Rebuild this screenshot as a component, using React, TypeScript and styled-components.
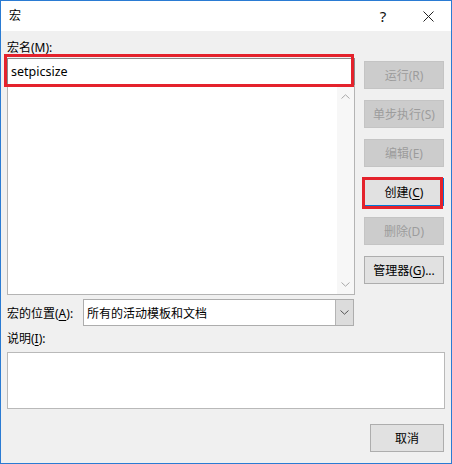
import styled, { createGlobalStyle } from "styled-components";

const GlobalStyle = createGlobalStyle`
	body {
		margin: 0;
		background: #ffffff;
		font-family: "Noto Sans", "Noto Sans CJK SC", sans-serif;
		font-size: 12px;
		color: #000000;
	}
`;

const Window = styled.div`
	width: 452px;
	height: 464px;
	box-sizing: border-box;
	border: 1px solid #2a7bd3;
	display: flex;
	flex-direction: column;
	background-color: #f0f0f0;
`;

const TitleBar = styled.div`
	height: 30px;
	display: flex;
	align-items: center;
	background-color: #ffffff;
	padding-left: 8px;
`;

const Title = styled.span`
	flex: 1;
	font-size: 12px;
	line-height: 16px;
`;

const CaptionButton = styled.div<{ $w: number }>`
	width: ${(p) => p.$w}px;
	height: 30px;
	display: flex;
	align-items: center;
	justify-content: center;
	font-size: 15px;
	color: #111111;
`;

const Body = styled.div`
	flex: 1;
	padding: 9px 6px 0;
	display: flex;
	flex-direction: column;
`;

const TopRow = styled.div`
	display: flex;
	align-items: flex-start;
	gap: 9px;
`;

const LeftCol = styled.div`
	width: 348px;
	display: flex;
	flex-direction: column;
`;

const Label = styled.div<{ $mt?: number }>`
	line-height: 16px;
	height: 16px;
	margin-top: ${(p) => p.$mt ?? 0}px;
	white-space: nowrap;
`;

const FieldWrap = styled.div`
	position: relative;
	margin-top: 2px;
`;

const NameField = styled.div`
	height: 27px;
	box-sizing: border-box;
	border: 1px solid #8a8a8a;
	background-color: #ffffff;
	padding-left: 3px;
	display: flex;
	align-items: center;
	font-size: 12.5px;
`;

const Highlight = styled.div<{ $l: number; $t: number; $w: number; $h: number }>`
	position: absolute;
	left: ${(p) => p.$l}px;
	top: ${(p) => p.$t}px;
	width: ${(p) => p.$w}px;
	height: ${(p) => p.$h}px;
	box-sizing: border-box;
	border: 3px solid #e4222c;
	pointer-events: none;
`;

const ListBox = styled.div`
	height: 211px;
	box-sizing: border-box;
	margin-top: -1px;
	border: 1px solid #b4b4b4;
	background-color: #ffffff;
	display: flex;
	justify-content: flex-end;
`;

const ScrollBar = styled.div`
	width: 17px;
	background-color: #f7f7f7;
	display: flex;
	flex-direction: column;
	justify-content: space-between;
	align-items: center;
	padding: 9px 0 7px;
`;

const RightCol = styled.div`
	width: 80px;
	padding-top: 21px;
	display: flex;
	flex-direction: column;
	gap: 11px;
`;

const ButtonWrap = styled.div`
	position: relative;
`;

const Button = styled.div<{ $disabled?: boolean; $default?: boolean; $w?: number }>`
	width: ${(p) => p.$w ?? 80}px;
	height: 28px;
	box-sizing: border-box;
	display: flex;
	align-items: center;
	justify-content: center;
	white-space: nowrap;
	background-color: ${(p) => (p.$disabled ? "#cccccc" : "#e1e1e1")};
	border: 1px solid
		${(p) => (p.$disabled ? "#c4c4c4" : p.$default ? "#0078d7" : "#adadad")};
	color: ${(p) => (p.$disabled ? "#9c9c9c" : "#000000")};
`;

const Mnemonic = styled.u`
	text-underline-offset: 2px;
`;

const LocationRow = styled.div`
	display: flex;
	align-items: center;
	margin-top: 4px;
	height: 27px;
`;

const LocationLabel = styled.div`
	width: 76px;
	white-space: nowrap;
`;

const Combo = styled.div`
	width: 271px;
	height: 27px;
	box-sizing: border-box;
	border: 1px solid #adadad;
	background-color: #ffffff;
	display: flex;
	align-items: stretch;
`;

const ComboText = styled.div`
	flex: 1;
	padding-left: 3px;
	display: flex;
	align-items: center;
`;

const ComboArrow = styled.div`
	width: 17px;
	background-color: #dcdcdc;
	border-left: 1px solid #b4b4b4;
	display: flex;
	align-items: center;
	justify-content: center;
`;

const DescBox = styled.div`
	margin-top: 5px;
	height: 57px;
	box-sizing: border-box;
	border: 1px solid #b9b9b9;
	background-color: #ffffff;
`;

const Footer = styled.div`
	display: flex;
	justify-content: flex-end;
	margin-top: 15px;
	padding-right: 1px;
`;

function Chevron({ up, color }: { up?: boolean; color: string }) {
	return (
		<svg width="9" height="5" viewBox="0 0 9 5">
			<path
				d={up ? "M0.5 4.5 L4.5 0.8 L8.5 4.5" : "M0.5 0.5 L4.5 4.2 L8.5 0.5"}
				fill="none"
				stroke={color}
				strokeWidth="1"
			/>
		</svg>
	);
}

function CloseIcon() {
	return (
		<svg width="11" height="11" viewBox="0 0 11 11">
			<path d="M0.5 0.5 L10.5 10.5 M10.5 0.5 L0.5 10.5" stroke="#222" strokeWidth="1" />
		</svg>
	);
}

function App() {
	return (
		<>
			<GlobalStyle />
			<Window>
				<TitleBar>
					<Title>宏</Title>
					<CaptionButton $w={44}>?</CaptionButton>
					<CaptionButton $w={46}>
						<CloseIcon />
					</CaptionButton>
				</TitleBar>
				<Body>
					<TopRow>
						<LeftCol>
							<Label>宏名(M):</Label>
							<FieldWrap>
								<NameField>setpicsize</NameField>
								<Highlight $l={-3} $t={-4} $w={350} $h={33} />
							</FieldWrap>
							<ListBox>
								<ScrollBar>
									<Chevron up color="#a8a8a8" />
									<Chevron color="#a8a8a8" />
								</ScrollBar>
							</ListBox>
						</LeftCol>
						<RightCol>
							<Button $disabled>运行(R)</Button>
							<Button $disabled>单步执行(S)</Button>
							<Button $disabled>编辑(E)</Button>
							<ButtonWrap>
								<Button $default>
									创建(<Mnemonic>C</Mnemonic>)
								</Button>
								<Highlight $l={-2} $t={-1} $w={81} $h={32} />
							</ButtonWrap>
							<Button $disabled>删除(D)</Button>
							<Button>
								管理器(<Mnemonic>G</Mnemonic>)...
							</Button>
						</RightCol>
					</TopRow>
					<LocationRow>
						<LocationLabel>
							宏的位置(<Mnemonic>A</Mnemonic>):
						</LocationLabel>
						<Combo>
							<ComboText>所有的活动模板和文档</ComboText>
							<ComboArrow>
								<Chevron color="#555555" />
							</ComboArrow>
						</Combo>
					</LocationRow>
					<Label $mt={5}>
						说明(<Mnemonic>I</Mnemonic>):
					</Label>
					<DescBox />
					<Footer>
						<Button $w={74}>取消</Button>
					</Footer>
				</Body>
			</Window>
		</>
	);
}

export default App;
